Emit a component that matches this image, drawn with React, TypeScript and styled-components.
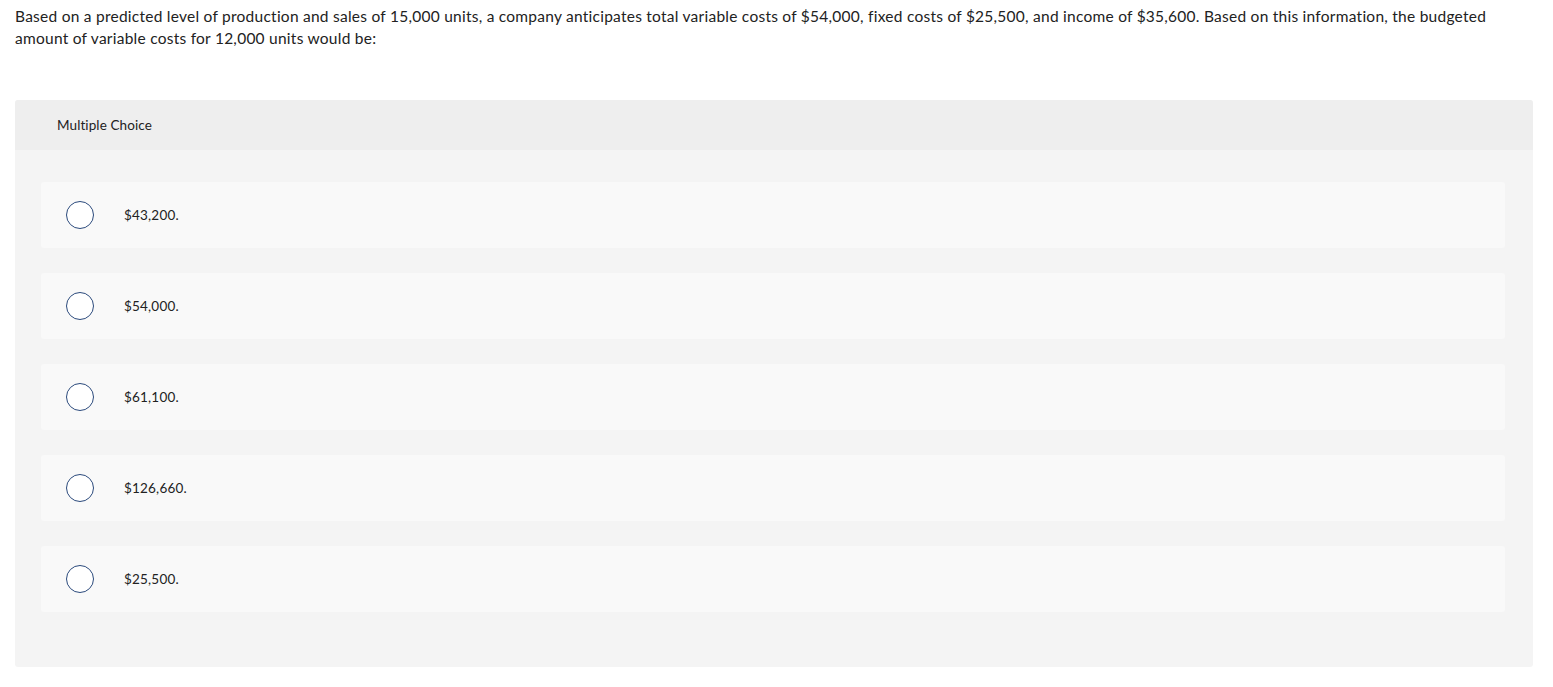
import React from "react";
import styled, { createGlobalStyle } from "styled-components";

const Global = createGlobalStyle`
  html, body { margin: 0; padding: 0; background: #fff; }
  body { font-family: "Lato", "Open Sans", sans-serif; color: #222; }
`;

const Page = styled.div`
  padding: 5px 20px 20px 15px;
`;

const Question = styled.p`
  margin: 0 0 51px 0;
  font-size: 15.5px;
  line-height: 22px;
  letter-spacing: 0.25px;
  color: #222;
`;

const Card = styled.section`
  border-radius: 3px;
  background: #f4f4f4;
  overflow: hidden;
`;

const Header = styled.div`
  height: 50px;
  background: #eeeeee;
  display: flex;
  align-items: center;
  padding-left: 42px;
  font-size: 13.5px;
  letter-spacing: 0.1px;
  color: #222;
`;

const Options = styled.div`
  display: flex;
  flex-direction: column;
  gap: 25px;
  padding: 32px 28px 55px 26px;
`;

const Option = styled.label`
  height: 66px;
  background: #f9f9f9;
  border-radius: 3px;
  display: flex;
  align-items: center;
  padding-left: 25px;
  cursor: pointer;
`;

const Radio = styled.span`
  width: 26px;
  height: 26px;
  border: 1px solid #2b4a7c;
  border-radius: 50%;
  background: #fff;
  flex: none;
`;

const OptionText = styled.span`
  margin-left: 30px;
  font-size: 13.5px;
  letter-spacing: 0.2px;
  color: #222;
`;

const choices = ["$43,200.", "$54,000.", "$61,100.", "$126,660.", "$25,500."];

export default function App() {
  return (
    <Page>
      <Global />
      <Question>
        Based on a predicted level of production and sales of 15,000 units, a company anticipates total variable costs of $54,000, fixed costs of $25,500, and income of $35,600. Based on this information, the budgeted amount of variable costs for 12,000 units would be:
      </Question>
      <Card>
        <Header>Multiple Choice</Header>
        <Options>
          {choices.map((c) => (
            <Option key={c}>
              <Radio />
              <OptionText>{c}</OptionText>
            </Option>
          ))}
        </Options>
      </Card>
    </Page>
  );
}
